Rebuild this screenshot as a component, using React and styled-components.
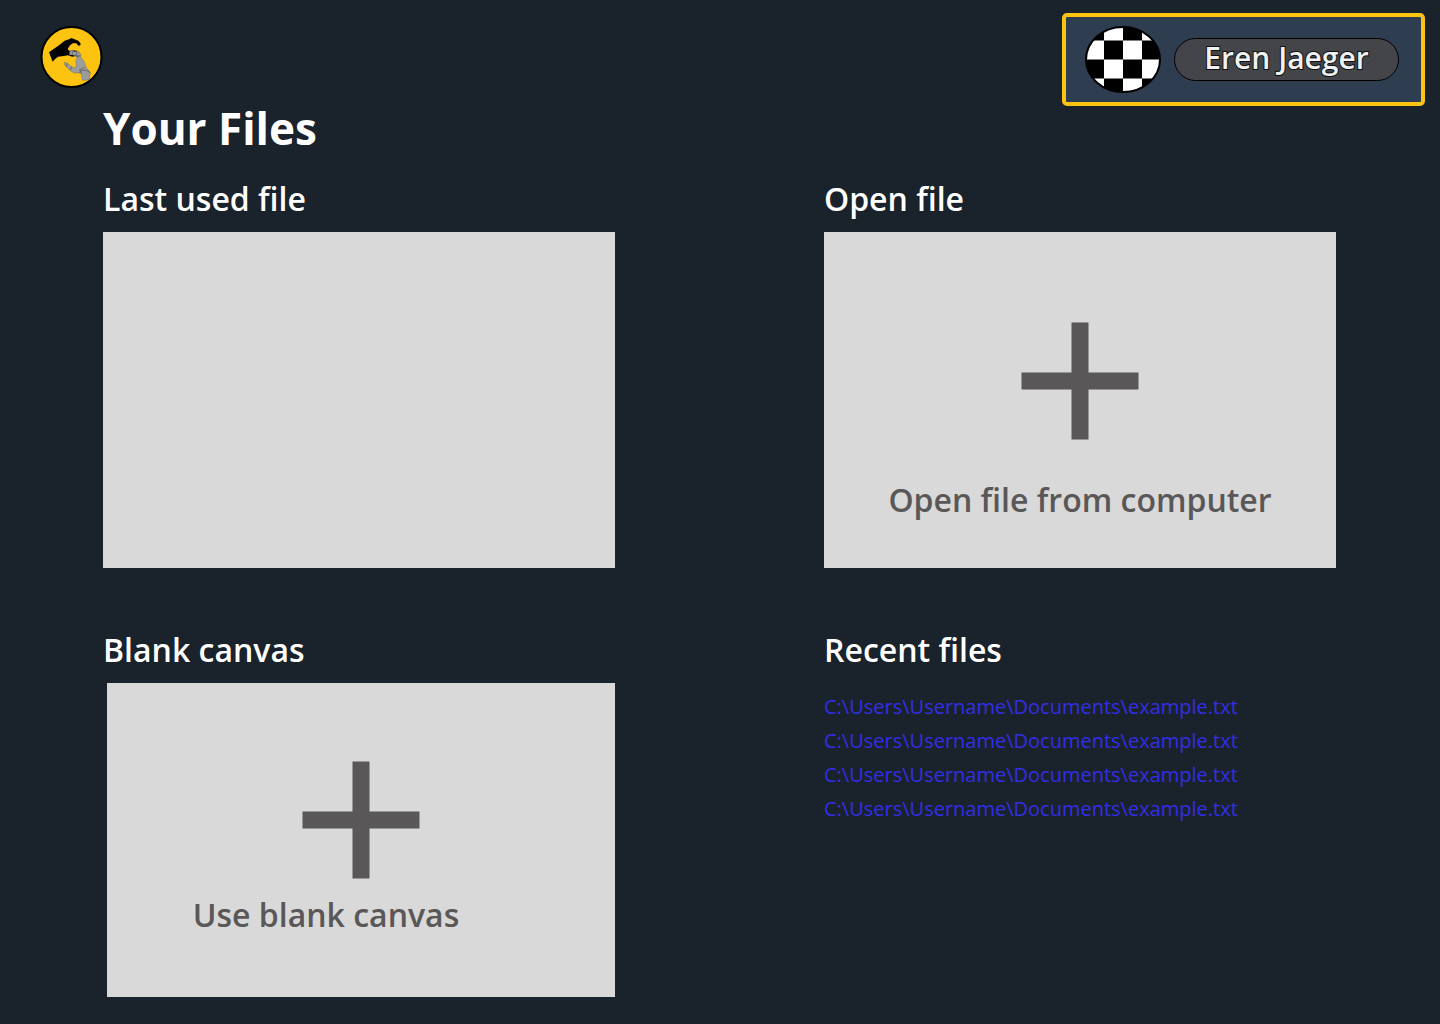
import React from "react";
import styled, { createGlobalStyle } from "styled-components";

const GlobalStyle = createGlobalStyle`
  *, *::before, *::after { box-sizing: border-box; }
  body {
    margin: 0;
    background: #1a222b;
    color: #ffffff;
    font-family: "Open Sans", "Noto Sans", sans-serif;
  }
  h1, h2, ul { margin: 0; padding: 0; }
  button { font: inherit; color: inherit; cursor: pointer; }
`;

const Header = styled.header`
  display: flex;
  justify-content: space-between;
  align-items: flex-start;
  padding: 13px 15px 0 40px;
`;

const LogoLink = styled.a`
  display: block;
  margin-top: 13px;
  line-height: 0;
`;

const ProfileButton = styled.button`
  display: flex;
  align-items: center;
  gap: 13px;
  padding: 9px 22px 9px 19px;
  height: 93px;
  background: #2e3d4f;
  border: 4px solid #fcc410;
  border-radius: 5px;
`;

const UserName = styled.span`
  display: flex;
  align-items: center;
  justify-content: center;
  width: 225px;
  height: 43px;
  padding-bottom: 4px;
  border: 1px solid #000000;
  border-radius: 22px;
  background: #434549;
  color: #eff1f3;
  font-size: 30px;
  font-weight: 600;
  line-height: 36px;
  -webkit-text-stroke: 2px #111111;
  paint-order: stroke fill;
`;

const Main = styled.main`
  padding: 0 104px 27px 103px;
`;

const Title = styled.h1`
  font-size: 44px;
  font-weight: 700;
  line-height: 44px;
`;

const Grid = styled.div`
  display: grid;
  grid-template-columns: 1fr 1fr;
  column-gap: 209px;
  row-gap: 63px;
  padding-top: 30px;
`;

const Section = styled.section`
  display: flex;
  flex-direction: column;
`;

const SectionTitle = styled.h2`
  margin-bottom: 14px;
  font-size: 32px;
  font-weight: 600;
  line-height: 38px;
`;

const FileCard = styled.button`
  display: flex;
  flex-direction: column;
  align-items: center;
  height: ${({ $compact }) => ($compact ? "314px" : "336px")};
  margin-left: ${({ $compact }) => ($compact ? "4px" : "0")};
  padding: ${({ $compact }) => ($compact ? "78px 0 0" : "90px 0 0")};
  border: 0;
  background: #d9d9d9;
  color: #595757;
`;

const CardLabel = styled.span`
  margin-top: ${({ $compact }) => ($compact ? "16px" : "40px")};
  padding-right: ${({ $compact }) => ($compact ? "70px" : "0")};
  font-size: 32px;
  font-weight: 600;
  line-height: 40px;
`;

const RecentList = styled.ul`
  padding: 7px 0 0 0;
  list-style: none;
`;

const RecentItem = styled.li`
  height: 34px;
  line-height: 34px;
`;

const RecentLink = styled.a`
  color: #322ee6;
  font-size: 20px;
  text-decoration: none;
`;

const Logo = () => (
  <svg width="63" height="62" viewBox="15 18 189 186" aria-hidden="true">
    <circle cx="109.5" cy="111" r="90" fill="#fcc410" stroke="#000" strokeWidth="6" />
    <path
      d="M42 97L72 76L89 62L104 57L109 54L117 57L131 63L137 71L136 76L130 77L124 70L113 70L104 77L98 87L103 93L116 91L127 93L128 98L121 101L122 108L112 110L99 106L86 108L69 110L61 116L53 125Z"
      fill="#000"
    />
    <path
      d="M103 98L106 93L115 91L118 95L127 93L134 97L138 106L137 112L147 123L153 140L166 158L162 180L142 181L139 161L132 158L120 160L107 153L97 143L89 135L88 127L95 128L110 140L121 144L124 137L122 122L126 116L122 108L114 105L104 105Z"
      fill="#9b9c9d"
      stroke="#555"
      strokeWidth="1"
    />
    <path
      d="M114 93L111 104M126 95L122 106L132 112M124 107L137 108M133 158L140 151L154 151L166 158M97 130L94 140M110 140L106 150M134 149L149 142M134 149L139 161"
      fill="none"
      stroke="#4c4c4c"
      strokeWidth="2"
    />
  </svg>
);

const Avatar = () => (
  <svg width="76" height="67" viewBox="0 0 76 67" aria-hidden="true">
    <defs>
      <clipPath id="avatar-shape">
        <ellipse cx="38" cy="33.5" rx="37" ry="32.5" />
      </clipPath>
    </defs>
    <g clipPath="url(#avatar-shape)">
      <rect width="76" height="67" fill="#fff" />
      <path
        d="M0 0H19V14.5H0ZM38 0H57V14.5H38ZM19 14.5H38V33.5H19ZM57 14.5H76V33.5H57ZM0 33.5H19V52.5H0ZM38 33.5H57V52.5H38ZM19 52.5H38V67H19ZM57 52.5H76V67H57Z"
        fill="#000"
      />
    </g>
    <ellipse cx="38" cy="33.5" rx="37" ry="32.5" fill="none" stroke="#000" strokeWidth="2" />
  </svg>
);

const PlusIcon = () => (
  <svg width="118" height="118" viewBox="0 0 118 118" aria-hidden="true">
    <path
      d="M50.5 .5H67.5V50.5H117.5V67.5H67.5V117.5H50.5V67.5H.5V50.5H50.5Z"
      fill="#595757"
    />
  </svg>
);

const recentFiles = Array.from({ length: 4 }, (_, id) => ({
  id,
  path: "C:\\Users\\Username\\Documents\\example.txt",
}));

export default function App() {
  return (
    <>
      <GlobalStyle />
      <Header>
        <LogoLink href="#" aria-label="Home">
          <Logo />
        </LogoLink>
        <ProfileButton type="button">
          <Avatar />
          <UserName>Eren Jaeger</UserName>
        </ProfileButton>
      </Header>
      <Main>
        <Title>Your Files</Title>
        <Grid>
          <Section>
            <SectionTitle>Last used file</SectionTitle>
            <FileCard type="button" aria-label="Last used file" />
          </Section>
          <Section>
            <SectionTitle>Open file</SectionTitle>
            <FileCard type="button">
              <PlusIcon />
              <CardLabel>Open file from computer</CardLabel>
            </FileCard>
          </Section>
          <Section>
            <SectionTitle>Blank canvas</SectionTitle>
            <FileCard type="button" $compact>
              <PlusIcon />
              <CardLabel $compact>Use blank canvas</CardLabel>
            </FileCard>
          </Section>
          <Section>
            <SectionTitle>Recent files</SectionTitle>
            <RecentList>
              {recentFiles.map((file) => (
                <RecentItem key={file.id}>
                  <RecentLink href="#">{file.path}</RecentLink>
                </RecentItem>
              ))}
            </RecentList>
          </Section>
        </Grid>
      </Main>
    </>
  );
}
